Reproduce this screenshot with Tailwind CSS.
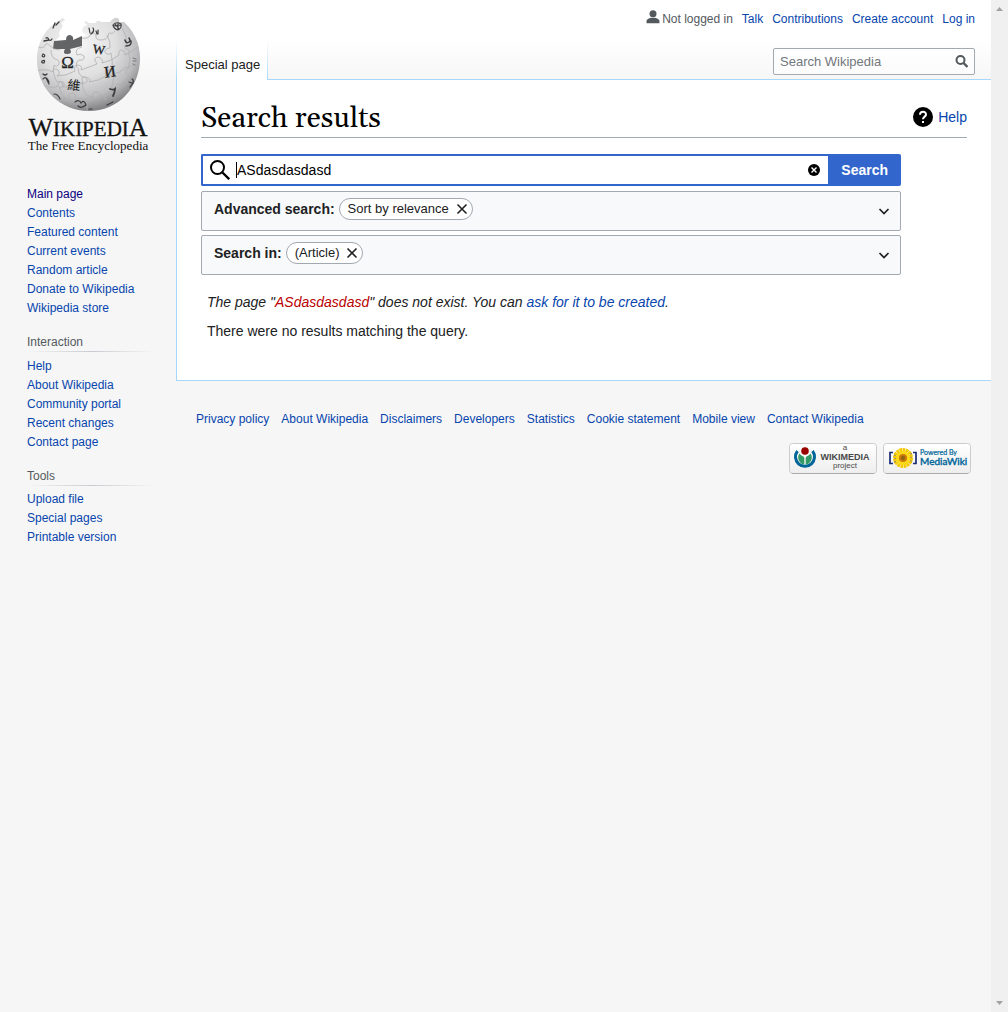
<!DOCTYPE html>
<html lang="en">
<head>
<meta charset="utf-8">
<meta name="viewport" content="width=device-width, initial-scale=1">
<title>Search results - Wikipedia</title>
<script src="https://cdn.jsdelivr.net/npm/@tailwindcss/browser@4"></script>
</head>
<body class="flex min-h-screen bg-[#f6f6f6] font-['Liberation_Sans',Arial,sans-serif] text-sm text-[#202122]">

<!-- Sidebar -->
<aside class="w-44 shrink-0">
  <div class="h-20 bg-linear-to-b from-white from-50% to-[#f6f6f6]">
    <a href="#" aria-label="Wikipedia main page" class="block">
      <svg class="block w-44 h-40" viewBox="0 0 176 160" role="img" aria-label="Wikipedia, The Free Encyclopedia">
        <defs>
          <radialGradient id="globe" cx="0.4" cy="0.28" r="0.72">
            <stop offset="0" stop-color="#f6f6f6"/>
            <stop offset="0.5" stop-color="#e0e0e1"/>
            <stop offset="0.8" stop-color="#bcbcbe"/>
            <stop offset="1" stop-color="#858588"/>
          </radialGradient>
          <clipPath id="ball"><circle cx="88.500" cy="59.500" r="51.500"/></clipPath>
        </defs>
        <path d="M62 18.500Q64 17.500 65 20L61 23Q64 26 61 29Q58 33 60 36L55 41L61 42L66 40Q66 35 70 36Q74 37 73 41L83 37L87 35L82 32L83 27L87 25L84 22Q86 20 89 23L95 23Q98 19 101 22L110 22Q114 17 117 18Q120 19 119 22L124 22C134 31 140 44 140 58C140 88 118 111 89 111C60 111 37 88 37 60C37 42 46 27 62 18.500Z" fill="url(#globe)"/>
        <path d="M54 41L66 40Q66 35 70 35Q74 36 73 40L82 36L82 46L70 49Q73 54 67 54Q62 54 65 49L53 49Z" fill="#636466"/>
        <g clip-path="url(#ball)" fill="none" stroke="#b0b0b3" stroke-width="0.800">
          <path d="M38 47q6 2 7-2q2-3 5 1q4 4 10 4M82 47q-8 2-5 8q4-2 7 1q1 5-5 4q-4 2-2 8M82 38q7 1 8-3q3-4 6 0q-1 5 5 5q7 0 8-7q4 2 6-2"/>
          <path d="M37 71q10-3 15 1q2-5 6-2q3 4-1 6q10 0 18-5q-2-6 3-6q5 1 3 5q8-3 16-6q-5-7 2-7q5 3 3 6q10-2 17-8q-1-5 3-5q4 2 3 5q8-4 13-8"/>
          <path d="M43 85q9 4 15 1q0-6 5-4q3 3 0 5q10 1 20-4q-3-7 3-6q6 2 3 5q10-1 17-6q-2-6 3-6q5 2 3 5q8-2 14-8q1 2 10-4"/>
          <path d="M57 101q6-4 12-3q-1-5 4-5q4 2 2 5q10 2 18-1q-1-6 4-5q5 2 2 5q10-2 16-8q0-5 4-5q3 2 2 4l11-8"/>
          <path d="M51 50q0 7 4 9q5 1 4 5q-3 4-5 1q-2 9 3 17q4-2 6 2q-1 5-4 3q2 8 8 14M78 68q0 6 4 9q6 0 5 5q-3 3-5 0q0 8 5 14q5-1 5 4q-2 3-5 2l0 10M107 35q4 7 3 13q-6 1-5 4q3 4 6 1q2 9 1 16q-6 1-4 5q3 3 6 1q0 9-5 18q-4 0-4 4q-1 5 2 2M122 28q5 8 5 16q-4 2-1 5q4 0 3 4q2 8-1 16q-5 3-1 5q3 1 0 8"/>
        </g>
        <g fill="#222" text-anchor="middle" class="font-['Liberation_Serif',serif]">
          <text x="67.500" y="68" font-size="17" stroke="#222" stroke-width="0.300">Ω</text>
          <text x="99" y="54" font-size="13" stroke="#222" stroke-width="0.300" transform="rotate(8 99 50)">W</text>
          <text x="110" y="77" font-size="16" stroke="#222" stroke-width="0.300" transform="rotate(-8 110 72)">И</text>
          <text x="74" y="90" font-size="13" class="font-['Noto_Sans_CJK_TC',sans-serif]" transform="rotate(6 74 86)">維</text>
        </g>
        <g fill="none" stroke="#3c3c3f" stroke-width="1.500" stroke-linecap="round">
          <path d="M110 89q4 1 5 0q0 3-2 7" stroke-width="1.800"/>
          <path d="M89 28l1 5M93 28q2 3-2 6M96 31l1 3M98 30v4" stroke-width="1.200"/>
          <path d="M113 25q3-4 8-1q1 4-3 6q-4-1-5-5M115 24l4 5M113 26l8-1M118 23l0 6" stroke-width="1.100"/>
          <path d="M125 40q1 4 4 2q2-1 0-4M131 41q1 5-5 5"/>
          <path d="M46 38q2-1 3 2q2 1 3-1M44 41l5-1M55 23l-2 5M59 22l-3 3" stroke-width="1.300"/>
          <path d="M43 54q-2 3 1 3q2-2-1-3M42 61q4-2 2 2q-3 0-2-2M43 74q2 2 4 0M43 79q3-4 6 3M46 78l3 6" stroke-width="1.200"/>
          <path d="M133 58l3 1M133 61h3M133 64l2 1" stroke="#77777a" stroke-width="1"/>
          <path d="M132 79q2 1 1 4l-3 4M129 82l3 1M54 94q4 0 6 5M75 102q4-3 6 1q3-4 5 2q-5 4-8 1M107 105l6-3M89 109h3" stroke-width="1.200"/>
        </g>
        <g fill="#111" text-anchor="middle" class="font-['Liberation_Serif',serif]">
          <text x="88" y="136" font-size="26" stroke="#111" stroke-width="0.300">W<tspan font-size="21">IKIPEDI</tspan>A</text>
          <text x="88" y="150" font-size="13">The Free Encyclopedia</text>
        </g>
      </svg>
    </a>
  </div>
  <nav class="mt-[105px] pl-[27px] pr-5 text-xs leading-[19px] text-[#0645ad]">
    <ul>
      <li><a href="#" class="text-[#0b0080]">Main page</a></li>
      <li><a href="#">Contents</a></li>
      <li><a href="#">Featured content</a></li>
      <li><a href="#">Current events</a></li>
      <li><a href="#">Random article</a></li>
      <li><a href="#">Donate to Wikipedia</a></li>
      <li><a href="#">Wikipedia store</a></li>
    </ul>
    <h2 class="mt-[15px] h-[18px] text-[#54595d]">Interaction</h2>
    <div class="h-px bg-linear-to-r from-transparent via-[#c8ccd1] via-50% to-transparent"></div>
    <ul class="mt-[5px]">
      <li><a href="#">Help</a></li>
      <li><a href="#">About Wikipedia</a></li>
      <li><a href="#">Community portal</a></li>
      <li><a href="#">Recent changes</a></li>
      <li><a href="#">Contact page</a></li>
    </ul>
    <h2 class="mt-[15px] h-[18px] text-[#54595d]">Tools</h2>
    <div class="h-px bg-linear-to-r from-transparent via-[#c8ccd1] via-50% to-transparent"></div>
    <ul class="mt-1">
      <li><a href="#">Upload file</a></li>
      <li><a href="#">Special pages</a></li>
      <li><a href="#">Printable version</a></li>
    </ul>
  </nav>
</aside>

<div class="min-w-0 flex-1">
  <header class="flex h-20 flex-col bg-linear-to-b from-white from-50% to-[#f6f6f6]">
    <ul class="flex h-10 justify-end gap-[9px] pt-2.5 pr-4 text-xs leading-[18px] text-[#0645ad]">
      <li class="flex text-[#54595d]">
        <svg class="mr-[2px] size-[14px]" viewBox="0 0 20 20" fill="#54595d" aria-hidden="true"><path d="M10 11c-5.920 0-8 3-8 5v3h16v-3c0-2-2.080-5-8-5z" transform="translate(-1.500 0) scale(1.150 1)"/><circle cx="10" cy="5.500" r="5"/></svg>
        Not logged in</li>
      <li><a href="#">Talk</a></li>
      <li><a href="#">Contributions</a></li>
      <li><a href="#">Create account</a></li>
      <li><a href="#">Log in</a></li>
    </ul>
    <div class="flex h-10">
      <div class="w-px bg-linear-to-b from-white to-[#a7d7f9]"></div>
      <a href="#" class="bg-white pl-2 pr-[7px] pt-[17px] text-[13px] leading-4">Special page</a>
      <div class="w-px bg-linear-to-b from-white to-[#a7d7f9]"></div>
      <div class="flex flex-1 justify-end border-b border-[#a7d7f9] pt-2 pr-4">
        <form class="flex h-[27px] w-[202px] items-center rounded-xs border border-[#a2a9b1] bg-white/50 pl-1.5">
          <input type="search" aria-label="Search Wikipedia" placeholder="Search Wikipedia" class="min-w-0 flex-1 pt-px text-[13px] outline-none placeholder:text-[#72777d]">
          <button type="button" aria-label="Go" class="px-1.5">
            <svg class="size-[13px]" viewBox="0 0 13 13" fill="none" stroke="#54595d" stroke-width="2"><circle cx="5.500" cy="5" r="4"/><path d="M8.500 8l4 4" stroke-width="2.400"/></svg>
          </button>
        </form>
      </div>
    </div>
  </header>

  <main class="border-b border-l border-[#a7d7f9] bg-white px-6 pt-5 pb-[38px]">
    <div class="flex h-[38px] items-center justify-between border-b border-[#a2a9b1]">
      <h1 class="font-['Gelasio',Georgia,'Liberation_Serif',serif] text-[29px] leading-9 text-black">Search results</h1>
      <a href="#" class="flex items-center gap-[5px] pb-1 text-[#0645ad]">
        <svg class="size-5" viewBox="0 0 20 20" aria-hidden="true"><circle cx="10" cy="10" r="10"/><path d="M7 7.700C7 3.500 13.200 3.800 13 7.600C12.800 9.700 10 9.700 10 12.300" fill="none" stroke="#fff" stroke-width="2"/><path d="M9 14h2v2H9z" fill="#fff"/></svg>
        Help</a>
    </div>

    <form class="mt-4 flex h-8 max-w-[700px]">
      <div class="flex min-w-0 flex-1 items-center rounded-l-xs border-2 border-r-0 border-[#3366cc] pl-[7px] pr-2 text-black">
        <svg class="size-5" viewBox="0 0 20 20" fill="none" stroke="#000" aria-hidden="true"><circle cx="7.500" cy="7.500" r="6.500" stroke-width="2"/><path d="M12.200 12.200l7 7" stroke-width="2.300"/></svg>
        <span class="ml-1.5 h-4 w-px bg-black"></span>
        <input type="text" aria-label="Search query" value="ASdasdasdasd" class="min-w-0 flex-1 outline-none">
        <button type="button" aria-label="Clear">
          <svg class="size-3" viewBox="0 0 12 12"><circle cx="6" cy="6" r="6"/><path d="M3.500 3.500l5 5M8.500 3.500l-5 5" stroke="#fff" stroke-width="1.400"/></svg>
        </button>
      </div>
      <button type="button" class="rounded-r-xs bg-[#3366cc] px-[13px] font-bold text-white">Search</button>
    </form>

    <section class="mt-[5px] flex h-10 max-w-[700px] items-center rounded-xs border border-[#a2a9b1] bg-[#f8f9fa] pl-3 pr-2.5">
      <h2 class="pb-1 font-bold">Advanced search:</h2>
      <span class="mb-1 ml-1 flex h-[22px] items-center rounded-full border border-[#a2a9b1] bg-white pl-2 pr-1 text-[13px]">Sort by relevance
        <button type="button" aria-label="Remove sort" class="ml-[7px]"><svg class="size-3" viewBox="0 0 12 12" stroke="#202122" stroke-width="1.600"><path d="M1.500 1.500l9 9M10.500 1.500l-9 9"/></svg></button></span>
      <button type="button" aria-label="Expand advanced search" class="ml-auto"><svg class="size-3" viewBox="0 0 12 12" fill="none" stroke="#202122" stroke-width="1.700"><path d="M1.500 4l4.500 4.500L10.500 4"/></svg></button>
    </section>
    <section class="mt-1 flex h-10 max-w-[700px] items-center rounded-xs border border-[#a2a9b1] bg-[#f8f9fa] pl-3 pr-2.5">
      <h2 class="pb-1 font-bold">Search in:</h2>
      <span class="mb-1 ml-1 flex h-[22px] items-center rounded-full border border-[#a2a9b1] bg-white pl-2 pr-1 text-[13px]">(Article)
        <button type="button" aria-label="Remove Article" class="ml-[7px]"><svg class="size-3" viewBox="0 0 12 12" stroke="#202122" stroke-width="1.600"><path d="M1.500 1.500l9 9M10.500 1.500l-9 9"/></svg></button></span>
      <button type="button" aria-label="Expand namespaces" class="ml-auto"><svg class="size-3" viewBox="0 0 12 12" fill="none" stroke="#202122" stroke-width="1.700"><path d="M1.500 4l4.500 4.500L10.500 4"/></svg></button>
    </section>

    <div class="mt-4 px-1.5 leading-[22px]">
      <p class="italic">The page "<a href="#" class="text-[#ba0000]">ASdasdasdasd</a>" does not exist. You can <a href="#" class="text-[#0645ad]">ask for it to be created</a>.</p>
      <p class="mt-[7px]">There were no results matching the query.</p>
    </div>
  </main>

  <footer class="px-5 pt-[29px]">
    <ul class="flex flex-wrap gap-x-3 text-xs leading-[18px] text-[#0645ad]">
      <li><a href="#">Privacy policy</a></li>
      <li><a href="#">About Wikipedia</a></li>
      <li><a href="#">Disclaimers</a></li>
      <li><a href="#">Developers</a></li>
      <li><a href="#">Statistics</a></li>
      <li><a href="#">Cookie statement</a></li>
      <li><a href="#">Mobile view</a></li>
      <li><a href="#">Contact Wikipedia</a></li>
    </ul>
    <div class="mt-[15px] flex justify-end gap-1.5">
      <a href="#" aria-label="A Wikimedia project">
        <svg class="h-[31px] w-[88px]" viewBox="0 0 88 31">
          <defs><linearGradient id="badge" x2="0" y2="1"><stop stop-color="#fff"/><stop offset="1" stop-color="#eee"/></linearGradient></defs>
          <rect x="0.500" y="0.500" width="87" height="30" rx="3" fill="url(#badge)" stroke="#ccc"/><path d="M3 30.500h82" stroke="#aaa"/>
          <path d="M8.500 8A9.500 9.500 0 1 0 23.500 8" fill="none" stroke="#069" stroke-width="3"/>
          <path d="M10.500 10.500C12 13 15 13 15.300 15V21.500A7 7 0 0 1 10.500 10.500ZM21.500 10.500C20 13 17 13 16.700 15V21.500A7 7 0 0 0 21.500 10.500Z" fill="#396"/>
          <circle cx="16" cy="8" r="3.800" fill="#900"/>
          <g fill="#484848" text-anchor="middle" class="font-['Liberation_Sans',sans-serif]">
            <text x="56" y="7" font-size="8">a</text>
            <text x="56" y="17" font-size="9" font-weight="bold">WIKIMEDIA</text>
            <text x="56" y="25" font-size="8">project</text>
          </g>
        </svg>
      </a>
      <a href="#" aria-label="Powered by MediaWiki">
        <svg class="h-[31px] w-[88px]" viewBox="0 0 88 31">
          <rect x="0.500" y="0.500" width="87" height="30" rx="3" fill="url(#badge)" stroke="#ccc"/><path d="M3 30.500h82" stroke="#aaa"/>
          <path d="M10 9.500H7v11h3M30 9.500h3v11h-3" fill="none" stroke="#1b2a72" stroke-width="1.700"/>
          <path d="M12 10v10M28 10v10" stroke="#1b2a72" stroke-width="1.300"/>
          <circle cx="20" cy="15" r="7.500" fill="none" stroke="#f5c800" stroke-width="5" stroke-dasharray="2.400 0.500"/>
          <circle cx="20" cy="15" r="7" fill="#fbd914"/><circle cx="20" cy="15" r="4" fill="#c9780c"/><circle cx="20" cy="15" r="2" fill="#8a6410"/>
          <g fill="#069" class="font-['Lato',sans-serif]">
            <text x="37" y="12" font-size="7" stroke="#069" stroke-width="0.200">Powered By</text>
            <text x="37" y="22" font-size="10" stroke="#069" stroke-width="0.400">MediaWiki</text>
          </g>
        </svg>
      </a>
    </div>
  </footer>
</div>

<!-- Scroll track -->
<div class="sticky top-0 flex h-screen w-[17px] shrink-0 flex-col items-center justify-between bg-[#f0f0f0] py-[7px]" aria-hidden="true">
  <svg class="h-1 w-[7px]" viewBox="0 0 7 4"><path d="M0 4L3.500 0L7 4z" fill="#a3a3a3"/></svg>
  <svg class="h-1 w-[7px]" viewBox="0 0 7 4"><path d="M0 0L3.500 4L7 0z" fill="#a3a3a3"/></svg>
</div>
</body>
</html>
